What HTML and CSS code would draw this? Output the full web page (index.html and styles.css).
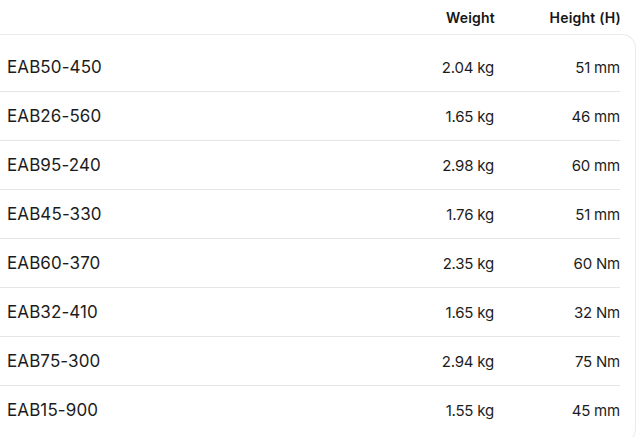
FILE: index.html
```html
<!DOCTYPE html>
<html>
<head>
<meta charset="utf-8">
<link rel="stylesheet" href="styles.css">
</head>
<body>
<div class="table">
  <div class="head">
    <span class="c-name"></span>
    <span class="c-w">Weight</span>
    <span class="c-h">Height (H)</span>
  </div>
  <div class="card">
    <div class="row"><span class="c-name">EAB50-450</span><span class="c-w">2.04 kg</span><span class="c-h">51 mm</span></div>
    <div class="row"><span class="c-name">EAB26-560</span><span class="c-w">1.65 kg</span><span class="c-h">46 mm</span></div>
    <div class="row"><span class="c-name">EAB95-240</span><span class="c-w">2.98 kg</span><span class="c-h">60 mm</span></div>
    <div class="row"><span class="c-name">EAB45-330</span><span class="c-w">1.76 kg</span><span class="c-h">51 mm</span></div>
    <div class="row"><span class="c-name">EAB60-370</span><span class="c-w">2.35 kg</span><span class="c-h">60 Nm</span></div>
    <div class="row"><span class="c-name">EAB32-410</span><span class="c-w">1.65 kg</span><span class="c-h">32 Nm</span></div>
    <div class="row"><span class="c-name">EAB75-300</span><span class="c-w">2.94 kg</span><span class="c-h">75 Nm</span></div>
    <div class="row last"><span class="c-name">EAB15-900</span><span class="c-w">1.55 kg</span><span class="c-h">45 mm</span></div>
  </div>
</div>
</body>
</html>
```

FILE: styles.css
```css
html, body {
  margin: 0;
  padding: 0;
  background: #ffffff;
}
body {
  font-family: Inter, "Liberation Sans", sans-serif;
  color: #1c1c1c;
  overflow: hidden;
}
.table {
  width: 636px;
}
.head {
  display: grid;
  grid-template-columns: 1fr 100px 126px;
  height: 34px;
  align-items: center;
  padding-right: 15px;
  font-size: 14px;
  font-weight: 600;
  color: #161616;
  letter-spacing: 0.2px;
}
.head .c-w, .head .c-h { text-align: right; }
.card {
  border: 1px solid #ebebeb;
  border-left: 0;
  border-radius: 0 14px 14px 0;
  padding: 8px 15px 8px 0;
  width: 620px;
}
.row {
  display: grid;
  grid-template-columns: 1fr 100px 126px;
  height: 48px;
  align-items: center;
  border-bottom: 1px solid #e6e6e6;
}
.row.last { border-bottom: 0; }
.c-name {
  padding-left: 7px;
  font-size: 17px;
  letter-spacing: 0.1px;
}
.row .c-w, .row .c-h {
  text-align: right;
  font-size: 15px;
  letter-spacing: -0.2px;
}
```
